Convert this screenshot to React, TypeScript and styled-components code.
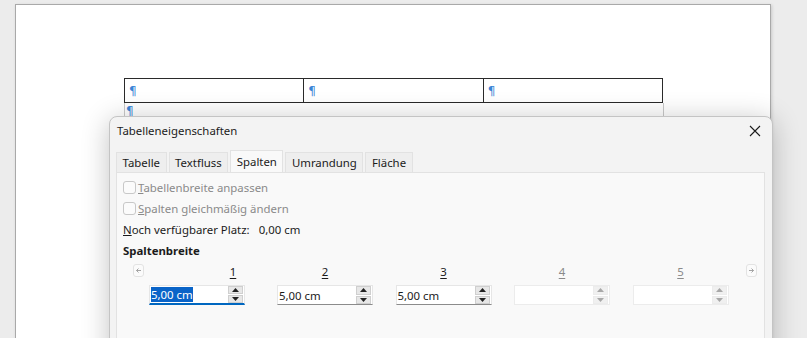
import React, { FC } from "react";
import styled, { createGlobalStyle } from "styled-components";

const FONT = `"Noto Sans", "Open Sans", sans-serif`;

const COLORS = {
  desk: "#ececec",
  sheet: "#ffffff",
  pilcrow: "#3b84d6",
  dialog: "#f3f3f3",
  panel: "#f9f9f9",
  border: "#e2e2e2",
  text: "#1b1b1b",
  muted: "#8a8a8a",
  accent: "#0067c0",
};

const GlobalStyle = createGlobalStyle`
  html, body {
    margin: 0;
    padding: 0;
    background: ${COLORS.desk};
  }
  body {
    font-family: ${FONT};
    font-size: 11.4px;
    color: ${COLORS.text};
  }
`;

const columns = [
  { label: "1", value: "5,00 cm", state: "focus", shift: 36 },
  { label: "2", value: "5,00 cm", state: "normal", shift: 0 },
  { label: "3", value: "5,00 cm", state: "normal", shift: 0 },
  { label: "4", value: "", state: "disabled", shift: 0 },
  { label: "5", value: "", state: "disabled", shift: 0 },
];

const tabs = ["Tabelle", "Textfluss", "Spalten", "Umrandung", "Fläche"];

const Arrow: FC<{ right?: boolean }> = ({ right }) => (
  <svg width="5" height="5" viewBox="0 0 5 5">
    <path
      d={right ? "M0 2.5 H4.5 M2.5 0.5 L4.5 2.5 L2.5 4.5" : "M5 2.5 H0.5 M2.5 0.5 L0.5 2.5 L2.5 4.5"}
      stroke="#9a9a9a"
      strokeWidth="0.9"
      fill="none"
    />
  </svg>
);

const App: FC = () => {
  return (
    <Screen>
      <GlobalStyle />
      <Sheet>
        <DocTable>
          <tbody>
            <tr>
              <Cell>¶</Cell>
              <Cell>¶</Cell>
              <Cell>¶</Cell>
            </tr>
          </tbody>
        </DocTable>
        <AfterTable>
          <Pilcrow>¶</Pilcrow>
        </AfterTable>
      </Sheet>

      <Dialog>
        <TitleBar>
          <Title>Tabelleneigenschaften</Title>
          <CloseButton aria-label="Schließen">
            <svg width="12" height="12" viewBox="0 0 12 12">
              <path d="M1 1 L11 11 M11 1 L1 11" stroke="#1b1b1b" strokeWidth="1.1" />
            </svg>
          </CloseButton>
        </TitleBar>

        <TabStrip>
          {tabs.map((t) => (
            <Tab key={t} $active={t === "Spalten"}>
              {t}
            </Tab>
          ))}
        </TabStrip>

        <Panel>
          <CheckRow>
            <CheckBox />
            <DimLabel>
              <u>T</u>abellenbreite anpassen
            </DimLabel>
          </CheckRow>
          <CheckRow>
            <CheckBox />
            <DimLabel>
              <u>S</u>palten gleichmäßig ändern
            </DimLabel>
          </CheckRow>
          <InfoRow>
            <span>
              <u>N</u>och verfügbarer Platz:
            </span>
            <span>0,00 cm</span>
          </InfoRow>
          <SectionTitle>Spaltenbreite</SectionTitle>

          <ColumnsRow>
            <NavButton>
              <Arrow />
            </NavButton>
            {columns.map((c, i) => (
              <Column key={c.label} $first={i === 0}>
                <ColumnLabel $disabled={c.state === "disabled"} $shift={c.shift}>
                  {c.label}
                </ColumnLabel>
                <Spin $state={c.state}>
                  <SpinEntry>
                    {c.state === "focus" ? <Selected>{c.value}</Selected> : c.value}
                  </SpinEntry>
                  <SpinButtons>
                    <SpinBtn $disabled={c.state === "disabled"}>
                      <svg width="7" height="4" viewBox="0 0 7 4">
                        <path d="M0 4 L3.5 0 L7 4 Z" fill="currentColor" />
                      </svg>
                    </SpinBtn>
                    <SpinBtn $disabled={c.state === "disabled"}>
                      <svg width="7" height="4" viewBox="0 0 7 4">
                        <path d="M0 0 L7 0 L3.5 4 Z" fill="currentColor" />
                      </svg>
                    </SpinBtn>
                  </SpinButtons>
                </Spin>
              </Column>
            ))}
            <NavButton $right>
              <Arrow right />
            </NavButton>
          </ColumnsRow>
        </Panel>
      </Dialog>
    </Screen>
  );
};

const Screen = styled.div`
  position: relative;
  width: 807px;
  height: 338px;
  overflow: hidden;
  background: ${COLORS.desk};
  padding: 4px 0 0 15px;
  box-sizing: border-box;
`;

const Sheet = styled.div`
  width: 756px;
  height: 400px;
  background: ${COLORS.sheet};
  border: 1px solid #a9a9a9;
  box-shadow: 1px 1px 3px rgba(0, 0, 0, 0.15);
  box-sizing: border-box;
  padding: 73px 0 0 108px;
`;

const DocTable = styled.table`
  border-collapse: collapse;
  width: 539px;
  table-layout: fixed;
`;

const Cell = styled.td`
  border: 1px solid #2a2a2a;
  height: 23px;
  padding: 0 0 0 4px;
  color: ${COLORS.pilcrow};
  font-family: "DejaVu Sans", sans-serif;
  font-size: 12px;
  line-height: 12px;
  vertical-align: middle;
`;

const AfterTable = styled.div`
  width: 538px;
  height: 20px;
  border-left: 1px solid #c9c9c9;
  border-right: 1px solid #c9c9c9;
`;

const Pilcrow = styled.span`
  color: ${COLORS.pilcrow};
  font-family: "DejaVu Sans", sans-serif;
  font-size: 12px;
  line-height: 12px;
  padding-left: 1px;
`;

const Dialog = styled.div`
  position: absolute;
  left: 109px;
  top: 116px;
  width: 664px;
  height: 280px;
  background: ${COLORS.dialog};
  border: 1px solid #c4c4c4;
  border-radius: 8px;
  box-sizing: border-box;
  box-shadow: 0 4px 28px rgba(0, 0, 0, 0.24);
  display: flex;
  flex-direction: column;
`;

const TitleBar = styled.div`
  height: 27px;
  display: flex;
  align-items: center;
  justify-content: space-between;
  padding: 0 10px 0 7px;
`;

const Title = styled.span`
  color: ${COLORS.text};
`;

const CloseButton = styled.div`
  width: 14px;
  height: 14px;
  display: flex;
  align-items: center;
  justify-content: center;
`;

const TabStrip = styled.div`
  display: flex;
  align-items: flex-end;
  gap: 2px;
  margin: 6px 0 0 6px;
  height: 22px;
`;

const Tab = styled.div<{ $active?: boolean }>`
  height: ${(p) => (p.$active ? "22px" : "20px")};
  padding: 0 5.5px;
  display: flex;
  align-items: center;
  background: ${(p) => (p.$active ? COLORS.panel : "#eeeeee")};
  border: 1px solid ${COLORS.border};
  border-bottom: none;
  box-sizing: border-box;
  color: ${COLORS.text};
`;

const Panel = styled.div`
  flex: 1;
  margin: 0 7px 0 6px;
  background: ${COLORS.panel};
  border: 1px solid ${COLORS.border};
  padding: 4px 0 0 6px;
  display: flex;
  flex-direction: column;
`;

const CheckRow = styled.div`
  height: 21px;
  display: flex;
  align-items: center;
  gap: 1px;
`;

const CheckBox = styled.span`
  width: 11px;
  height: 11px;
  border: 1px solid #c8c8c8;
  border-radius: 3px;
  background: #fbfbfb;
  margin-right: 1px;
`;

const DimLabel = styled.span`
  color: ${COLORS.muted};
`;

const InfoRow = styled.div`
  height: 21px;
  display: flex;
  align-items: center;
  gap: 9px;
`;

const SectionTitle = styled.div`
  height: 21px;
  display: flex;
  align-items: center;
  font-weight: 700;
`;

const ColumnsRow = styled.div`
  display: flex;
  align-items: flex-start;
  margin: 3px 0 0 10px;
`;

const NavButton = styled.div<{ $right?: boolean }>`
  width: 9px;
  height: 11px;
  border: 1px solid #e3e3e3;
  border-radius: 3px;
  background: #fbfbfb;
  display: flex;
  align-items: center;
  justify-content: center;
  margin-left: ${(p) => (p.$right ? "17px" : "0")};
  margin-right: ${(p) => (p.$right ? "0" : "5px")};
`;

const Column = styled.div<{ $first?: boolean }>`
  width: 96px;
  display: flex;
  flex-direction: column;
  align-items: center;
  gap: 6px;
  margin-right: ${(p) => (p.$first ? "32px" : "22.5px")};

  &:nth-last-child(2) {
    margin-right: 0;
  }
`;

const ColumnLabel = styled.span<{ $disabled?: boolean; $shift: number }>`
  height: 15px;
  line-height: 15px;
  text-decoration: underline;
  text-underline-offset: 2px;
  color: ${(p) => (p.$disabled ? COLORS.muted : COLORS.text)};
  margin-left: ${(p) => p.$shift * 2}px;
`;

const Spin = styled.div<{ $state: string }>`
  width: 96px;
  height: 20px;
  box-sizing: border-box;
  display: flex;
  background: #ffffff;
  border: 1px solid ${(p) => (p.$state === "disabled" ? "#ececec" : "#e6e6e6")};
  border-bottom: ${(p) =>
    p.$state === "focus"
      ? `2px solid ${COLORS.accent}`
      : p.$state === "normal"
      ? "1px solid #8b8b8b"
      : "1px solid #ececec"};
`;

const SpinEntry = styled.div`
  flex: 1;
  display: flex;
  align-items: center;
  padding-left: 1px;
  line-height: 15px;
`;

const Selected = styled.span`
  background: #0a64c8;
  color: #ffffff;
`;

const SpinButtons = styled.div`
  width: 15px;
  display: flex;
  flex-direction: column;
  justify-content: center;
  gap: 1px;
  padding-right: 1px;
`;

const SpinBtn = styled.div<{ $disabled?: boolean }>`
  height: 8px;
  background: ${(p) => (p.$disabled ? "#f0f0f0" : "#e7e7e7")};
  border: 1px solid ${(p) => (p.$disabled ? "#ececec" : "#cfcfcf")};
  color: ${(p) => (p.$disabled ? "#a8a8a8" : "#222")};
  display: flex;
  align-items: center;
  justify-content: center;
`;

export default App;
